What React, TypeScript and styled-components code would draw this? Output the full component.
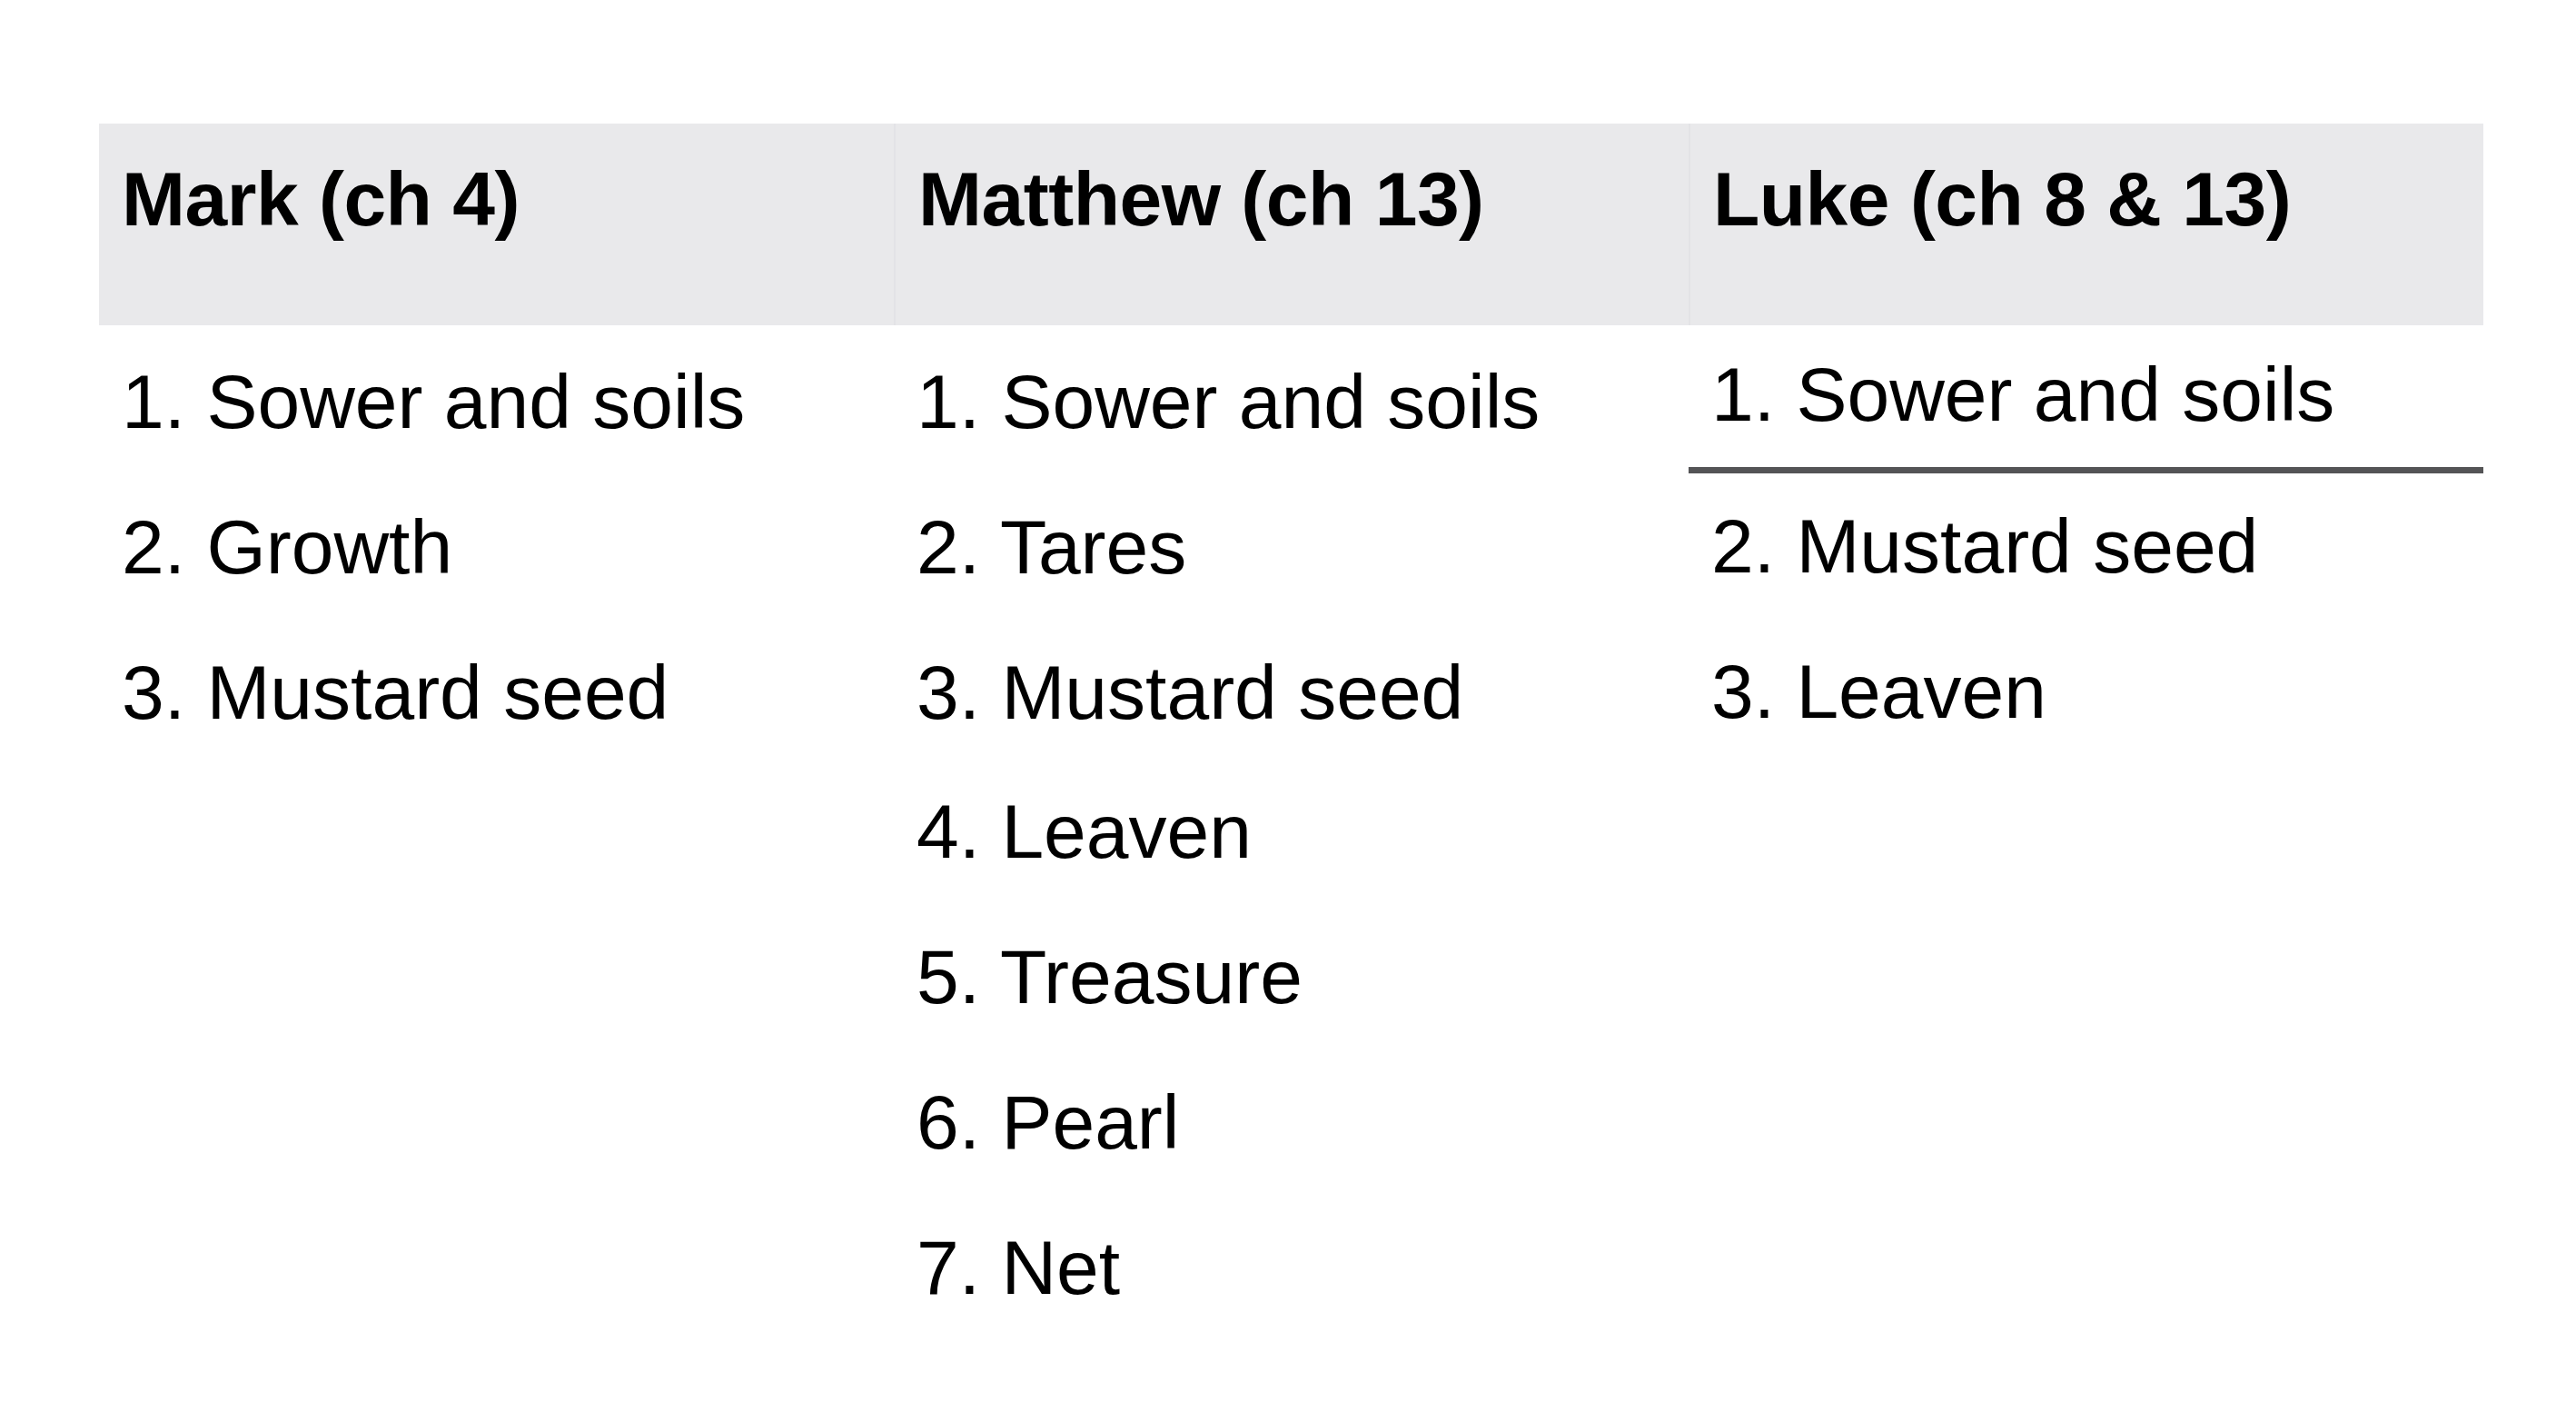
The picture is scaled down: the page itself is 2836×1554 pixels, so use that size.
import React from 'react';
import styled, {createGlobalStyle} from "styled-components";

const GlobalStyle = createGlobalStyle`
  html, body {
    margin: 0;
    padding: 0;
    background: #fff;
  }
  body {
    font-family: "Liberation Sans", Arial, Helvetica, sans-serif;
    color: #000;
  }
`;

const Page = styled.div`
  padding: 136px 102px 0 109px;
  min-height: 1554px;
  box-sizing: border-box;
`;

const Table = styled.div`
  display: grid;
  grid-template-columns: repeat(3, 875px);
  width: 2625px;
`;

const HeaderCell = styled.div<{ $divider?: boolean }>`
  background-color: #e9e9eb;
  height: 222px;
  box-sizing: border-box;
  padding: 36px 25px 0 25px;
  font-size: 84px;
  font-weight: bold;
  line-height: 94px;
  letter-spacing: -0.5px;
  border-left: ${p => p.$divider ? '2px solid #e3e3e6' : 'none'};
  white-space: nowrap;
`;

const Column = styled.div`
  display: flex;
  flex-direction: column;
  padding-top: 4px;
`;

const Item = styled.div<{ $nudge?: number; $ruled?: boolean }>`
  font-size: 84px;
  line-height: 160px;
  padding: 0 25px;
  margin-top: ${p => p.$nudge ?? 0}px;
  border-bottom: ${p => p.$ruled ? '7px solid #545456' : 'none'};
  white-space: nowrap;
`;

type Entry = { text: string; nudge?: number; ruled?: boolean };

const columns: { title: string; items: Entry[] }[] = [
    {
        title: 'Mark (ch 4)',
        items: [
            {text: '1. Sower and soils'},
            {text: '2. Growth'},
            {text: '3. Mustard seed'},
        ],
    },
    {
        title: 'Matthew (ch 13)',
        items: [
            {text: '1. Sower and soils'},
            {text: '2. Tares'},
            {text: '3. Mustard seed'},
            {text: '4. Leaven', nudge: -7},
            {text: '5. Treasure'},
            {text: '6. Pearl'},
            {text: '7. Net'},
        ],
    },
    {
        title: 'Luke (ch 8 & 13)',
        items: [
            {text: '1. Sower and soils', nudge: -8, ruled: true},
            {text: '2. Mustard seed'},
            {text: '3. Leaven'},
        ],
    },
];

export default function App() {
    return (
        <>
            <GlobalStyle/>
            <Page>
                <Table>
                    {columns.map((col, i) => (
                        <HeaderCell key={col.title} $divider={i > 0}>{col.title}</HeaderCell>
                    ))}
                    {columns.map(col => (
                        <Column key={col.title + '-body'}>
                            {col.items.map(item => (
                                <Item key={item.text} $nudge={item.nudge} $ruled={item.ruled}>
                                    {item.text}
                                </Item>
                            ))}
                        </Column>
                    ))}
                </Table>
            </Page>
        </>
    );
}
